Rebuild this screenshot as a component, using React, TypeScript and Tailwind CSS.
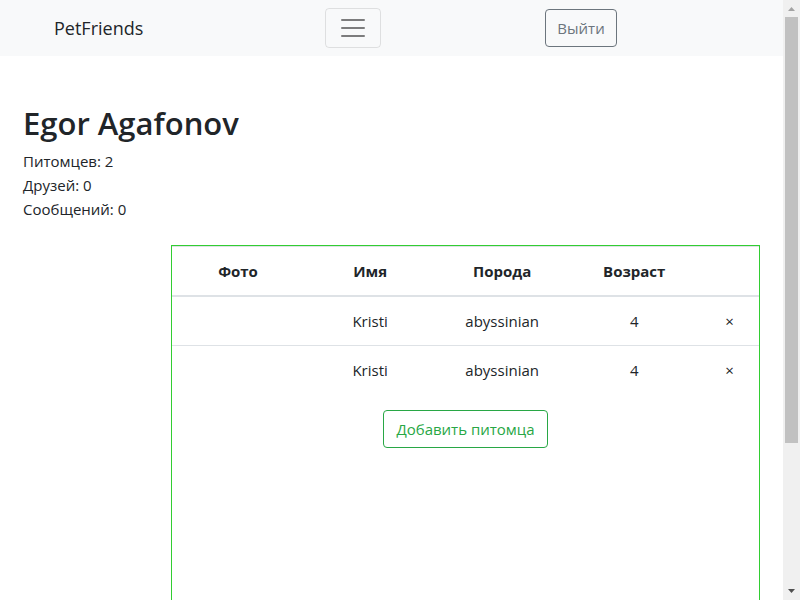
const pets = [
  { id: 1, name: "Kristi", breed: "abyssinian", age: 4 },
  { id: 2, name: "Kristi", breed: "abyssinian", age: 4 },
];

function Navbar() {
  return (
    <nav className="flex h-14 shrink-0 items-center justify-between bg-[#f8f9fa] pr-[166px] pl-[54px]">
      <a href="#" className="mr-[18px] text-[18px] leading-[30px] text-[#212529]">
        PetFriends
      </a>
      <button
        type="button"
        aria-label="Toggle navigation"
        className="flex h-10 w-14 items-center justify-center rounded border border-black/10"
      >
        <svg viewBox="0 0 30 30" className="size-[30px]" fill="none" stroke="#000" strokeOpacity="0.5" strokeWidth="2" strokeLinecap="round">
          <path d="M4 7h22M4 15h22M4 23h22" />
        </svg>
      </button>
      <button type="button" className="h-[38px] w-[72px] rounded border border-[#6c757d] text-[#6c757d]">
        Выйти
      </button>
    </nav>
  );
}

function PetTable() {
  return (
    <table className="w-full table-fixed border-t border-[#dee2e6] text-center">
      <thead>
        <tr className="h-[49px] border-b-2 border-[#dee2e6]">
          <th className="w-[22.5%]">Фото</th>
          <th className="w-[22.5%]">Имя</th>
          <th className="w-[22.5%]">Порода</th>
          <th className="w-[22.5%]">Возраст</th>
          <th className="w-[10%]" />
        </tr>
      </thead>
      <tbody>
        {pets.map((pet) => (
          <tr key={pet.id} className="h-[50px] border-b border-[#dee2e6] last:h-[49px] last:border-b-0">
            <td />
            <td>{pet.name}</td>
            <td>{pet.breed}</td>
            <td>{pet.age}</td>
            <td>
              <a href="#" aria-label="Удалить питомца">×</a>
            </td>
          </tr>
        ))}
      </tbody>
    </table>
  );
}

function ScrollRail() {
  return (
    <div className="flex w-[17px] shrink-0 flex-col items-center bg-[#f0f0f0]" aria-hidden="true">
      <svg viewBox="0 0 17 17" className="size-[17px]" fill="#a3a3a3">
        <path d="M5 11L8.500 7L12 11z" />
      </svg>
      <div className="h-[71%] w-[13px] bg-[#c1c1c1]" />
      <svg viewBox="0 0 17 17" className="mt-auto size-[17px]" fill="#505050">
        <path d="M5 6H12L8.500 10z" />
      </svg>
    </div>
  );
}

export default function App() {
  return (
    <div className="flex h-screen overflow-hidden bg-white font-['Open_Sans','Noto_Sans',sans-serif] text-[15px] leading-6 text-[#212529]">
      <div className="flex min-w-0 flex-1 flex-col">
        <Navbar />
        <main className="flex min-h-0 flex-1 flex-col px-[23px] pt-12">
          <header>
            <h1 className="mb-[7px] text-[31px] leading-[38px] font-semibold">Egor Agafonov</h1>
            <p>Питомцев: 2</p>
            <p>Друзей: 0</p>
            <p>Сообщений: 0</p>
          </header>
          <section className="mt-6 ml-[148px] min-h-0 flex-1 border-x border-t border-[#32cd32]">
            <PetTable />
            <div className="mt-[15px] text-center">
              <button type="button" className="h-[38px] rounded border border-[#28a745] px-3 text-[#28a745]">
                Добавить питомца
              </button>
            </div>
          </section>
        </main>
      </div>
      <ScrollRail />
    </div>
  );
}
